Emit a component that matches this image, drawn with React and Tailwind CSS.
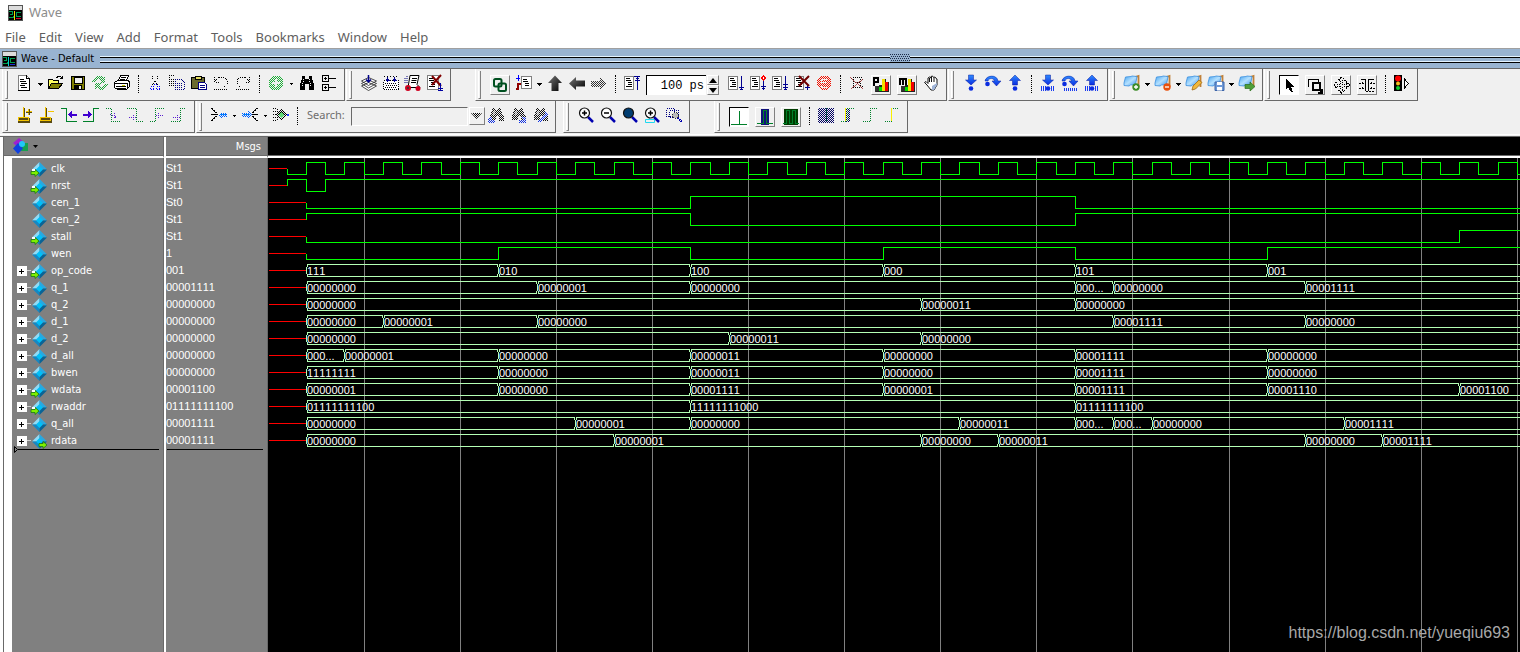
import { useState } from "react";

// time step n -> x inside the wave pane (half a clock period per step)
const tx = (n) => Math.round(38 + 19.22 * n);

const signals = [
  { name: "clk", value: "St1", port: "in", levels: Array.from({ length: 65 }, (_, i) => [i - 1, i % 2]) },
  { name: "nrst", value: "St1", port: "in", levels: [[-1, 1], [0, 0], [1, 1]] },
  { name: "cen_1", value: "St0", levels: [[0, 0], [20, 1], [40, 0]] },
  { name: "cen_2", value: "St1", levels: [[0, 1], [20, 0], [40, 1]] },
  { name: "stall", value: "St1", port: "in", levels: [[0, 0], [60, 1]] },
  { name: "wen", value: "1", levels: [[0, 0], [10, 1], [20, 0], [30, 1], [40, 0], [50, 1]] },
  { name: "op_code", value: "001", port: "in", bus: [[0, "111"], [10, "010"], [20, "100"], [30, "000"], [40, "101"], [50, "001"]] },
  { name: "q_1", value: "00001111", bus: [[0, "00000000"], [12, "00000001"], [20, "00000000"], [40, "000..."], [42, "00000000"], [52, "00001111"]] },
  { name: "q_2", value: "00000000", bus: [[0, "00000000"], [32, "00000011"], [40, "00000000"]] },
  { name: "d_1", value: "00000000", bus: [[0, "00000000"], [4, "00000001"], [12, "00000000"], [42, "00001111"], [52, "00000000"]] },
  { name: "d_2", value: "00000000", bus: [[0, "00000000"], [22, "00000011"], [32, "00000000"]] },
  { name: "d_all", value: "00000000", bus: [[0, "000..."], [2, "00000001"], [10, "00000000"], [20, "00000011"], [30, "00000000"], [40, "00001111"], [50, "00000000"]] },
  { name: "bwen", value: "00000000", bus: [[0, "11111111"], [10, "00000000"], [20, "00000011"], [30, "00000000"], [40, "00001111"], [50, "00000000"]] },
  { name: "wdata", value: "00001100", port: "in", bus: [[0, "00000001"], [10, "00000000"], [20, "00001111"], [30, "00000001"], [40, "00001111"], [50, "00001110"], [60, "00001100"]] },
  { name: "rwaddr", value: "01111111100", port: "in", bus: [[0, "01111111100"], [20, "11111111000"], [40, "01111111100"]] },
  { name: "q_all", value: "00001111", bus: [[0, "00000000"], [14, "00000001"], [20, "00000000"], [34, "00000011"], [40, "000..."], [42, "000..."], [44, "00000000"], [54, "00001111"]] },
  { name: "rdata", value: "00001111", port: "out", bus: [[0, "00000000"], [16, "00000001"], [32, "00000000"], [36, "00000011"], [52, "00000000"], [56, "00001111"]] },
];

const menus = ["File", "Edit", "View", "Add", "Format", "Tools", "Bookmarks", "Window", "Help"];

/* ---------- icons ---------- */

// 1px checkerboard used for greyed out icons
function Defs() {
  return (
    <svg className="absolute size-0" aria-hidden="true">
      <defs>
        <pattern id="checker" width="2" height="2" patternUnits="userSpaceOnUse">
          <path d="M0 0h1v1h-1zM1 1h1v1h-1z" fill="#fff" shapeRendering="crispEdges" />
        </pattern>
        <mask id="dither" maskUnits="userSpaceOnUse" x="0" y="0" width="20" height="20">
          <rect width="20" height="20" fill="url(#checker)" />
        </mask>
        <linearGradient id="blue" x1="0" y1="0" x2="0" y2="1">
          <stop offset="0" stopColor="#2f8cff" />
          <stop offset="1" stopColor="#0a2be0" />
        </linearGradient>
        <linearGradient id="flag" x1="0" y1="0" x2="1" y2="1">
          <stop offset="0" stopColor="#4aa6f0" />
          <stop offset="0.5" stopColor="#b4e0ff" />
          <stop offset="1" stopColor="#3b93e8" />
        </linearGradient>
        <linearGradient id="dark" x1="0" y1="0" x2="1" y2="1">
          <stop offset="0" stopColor="#777" />
          <stop offset="1" stopColor="#000" />
        </linearGradient>
      </defs>
    </svg>
  );
}

function Px({ children, soft, off, w = 16 }) {
  return (
    <svg width={w} height="16" viewBox={`0 0 ${w} 16`} fill="none" className="shrink-0 overflow-visible" shapeRendering={soft ? "auto" : "crispEdges"} aria-hidden="true">
      {off ? <g mask="url(#dither)">{children}</g> : children}
    </svg>
  );
}

const WaveLogo = ({ c = "#e00030", m = "#f0e000" }) => (
  <Px>
    <path d="M.5.5h14v15h-14z" fill="#000" stroke="#555" />
    <path d="M1 1h13v4H1z" fill="#dcdcdc" />
    <path d="M1 6.500h3v3H2M1 12.500h4v-2M8 7.500h5M8.500 7v4h4" stroke="#00a050" />
    <path d="M6.500 6v9" stroke={m} />
    <path d="M8 13.500h5" stroke={c} />
  </Px>
);
const NewIcon = () => (
  <Px>
    <path d="M1.500.5h8l3 3v12h-11z" fill="#fff" stroke="#808080" />
    <path d="M9.500 0v3.500h3v12H1M3 4.500h4M3 6.500h6M4 8.500h6M3 10.500h5M4 12.500h6" stroke="#000" />
  </Px>
);
const OpenIcon = () => (
  <Px>
    <path d="M.5 13.500v-9h4l1 1h5v3" fill="#ffff60" stroke="#000" />
    <path d="M.5 13.500l3-5h11l-4 5z" fill="#808000" stroke="#000" />
    <path d="M8.500 2.500l2-1h2l2 2M14.500 1v3M12 3.500h3" stroke="#000" />
  </Px>
);
const SaveIcon = () => (
  <Px>
    <path d="M1.500 1.500h13v13h-13z" fill="#808000" stroke="#000" />
    <path d="M4 2h8v6H4z" fill="#f0f0f0" stroke="#000" />
    <path d="M4 10h8v5H4z" fill="#000" />
    <path d="M9 11h2v3H9z" fill="#f0f0f0" />
  </Px>
);
const RefreshIcon = () => (
  <Px off>
    <path d="M0 7l2-4 4-2h3l2 2 2-1v6H7l2-2-2-2-3 1-1 3zM16 9l-2 4-3 2H8l-3-2-2 1V8h6l-2 2 2 2 2-1 2-2z" fill="#1fa43a" />
  </Px>
);
const PrintIcon = () => (
  <Px>
    <path d="M4.500 5.500l2-5h8l-2 5" fill="#fff" stroke="#000" />
    <path d="M7 2.500h5M6 4.500h5" stroke="#000" />
    <path d="M.5 12.500v-5l3-2h11l1 2v4l-3 3h-9z" fill="#fff" stroke="#000" />
    <path d="M1 8.500h12M2 11.500h10M3 13.500h9M13.500 8v5" stroke="#000" />
    <path d="M8 10h3v1H8z" fill="#d0d000" />
  </Px>
);
const CutIcon = () => (
  <Px>
    <path d="M5.500 1v2l5 7M10.500 1v2l-5 7" stroke="#000" strokeDasharray="1 1" />
    <path d="M3.500 11.500h3v3h-3zM9.500 11.500h3v3h-3zM7 9.500h3" stroke="#00f" strokeDasharray="1 1" />
  </Px>
);
const CopyIcon = () => (
  <Px off>
    <path d="M.5.5h5l3 3v7h-8zM2 4.500h4M2 6.500h4M2 8.500h4" stroke="#000" />
    <path d="M6.500 4.500h6l3 3v7h-9z" fill="#f0f0f0" stroke="#000080" />
    <path d="M8 8.500h6M8 10.500h6M8 12.500h6" stroke="#000080" />
  </Px>
);
const PasteIcon = () => (
  <Px>
    <path d="M.5 2.500h13v11H.5z" fill="#6b6b30" stroke="#000" />
    <path d="M4 1h6v3H4z" fill="#e8e060" stroke="#000" />
    <path d="M7.500 7.500h6l2 2v5h-8z" fill="#fff" stroke="#000080" />
    <path d="M9 10.500h5M9 12.500h5" stroke="#000080" />
  </Px>
);
const UndoIcon = () => (
  <Px>
    <path d="M1.500 2v5h5M2 6l4-4h5l3 3v4l-4 4" stroke="#000" strokeDasharray="1 1" />
    <path d="M1 14.500h14" stroke="#000" strokeDasharray="1 1" />
  </Px>
);
const RedoIcon = () => (
  <Px>
    <path d="M14.500 2v5h-5M14 6l-4-4H5L2 5v4l4 4" stroke="#000" strokeDasharray="1 1" />
    <path d="M1 14.500h14" stroke="#000" strokeDasharray="1 1" />
  </Px>
);
const AddIcon = () => (
  <Px off>
    <circle cx="8" cy="8" r="7.500" fill="#1fae3a" />
    <path d="M8 4v8M4 8h8" stroke="#f0f0f0" strokeWidth="2" />
  </Px>
);
const FindIcon = () => (
  <Px>
    <path d="M3 1h3v3h4V1h3v3l2 5v6h-5V9H6v6H1V9l2-5z" fill="#000" />
    <path d="M4.500 4v3M3.500 8v4M10.500 4v3M11.500 8v4" stroke="#f0f0f0" strokeDasharray="1 1" />
  </Px>
);
const TreeIcon = () => (
  <Px>
    <path d="M1.500.5h6v6h-6zM1.500 9.500h6v6h-6zM8 3.500h7M8 12.500h7M3 3.500h3M4.500 2v3M3 12.500h3M4.500 11v3" stroke="#000" />
  </Px>
);
const CompileIcon = () => (
  <Px soft>
    <path d="M.5 11l7-3.500 8 3.500-8 4.500zM.5 8.500l7-3.500 8 3.500-8 4.500zM.5 6l7-3.500L15.500 6l-8 4.500z" fill="#fff" stroke="#222" strokeWidth=".8" />
    <path d="M7.500 0v6M5 4.500l2.500 2.500L10 4.500" stroke="#00008b" strokeWidth="1.500" />
  </Px>
);
const CompileAllIcon = () => (
  <Px>
    <path d="M.5 5.500h15v9H.5z" fill="#fff" stroke="#000" strokeDasharray="1 1" />
    <path d="M2 8.500h12M3 10.500h12M2 12.500h12" stroke="#000" strokeDasharray="1 1" />
    <path d="M1 1.500h14" stroke="#000" strokeDasharray="1 2" />
    <path d="M4.500 2v5M2.500 5.500h4M11.500 2v5M9.500 5.500h4" stroke="#00008b" strokeWidth="1" />
    <path d="M3 4.500h3M10 4.500h3" stroke="#00008b" />
  </Px>
);
const SimulateIcon = () => (
  <Px soft>
    <path d="M5 .5h9l-2 9 3 3H3z" fill="#fff" stroke="#000" />
    <path d="M7 3.500h5M6.500 5.500h5M6 7.500h5" stroke="#000" />
    <path d="M2 1v8M0 3v6" stroke="#000080" strokeDasharray="1 1" />
    <circle cx="3" cy="13" r="2" fill="#333" stroke="#d00020" strokeWidth="2" />
    <circle cx="13" cy="13.500" r="2.500" fill="#d00020" />
  </Px>
);
const Lines = () => <path d="M2 3.500h4M2 5.500h5M4 7.500h4M4 9.500h4M2 11.500h6" stroke="#000" />;
const EndSimIcon = () => (
  <Px>
    <path d="M.5.5h11v14H.5z" fill="#fff" stroke="#808080" />
    <Lines />
    <path d="M5 1l9 10M14 0L5 10" stroke="#800000" strokeWidth="2" shapeRendering="auto" />
    <path d="M13.500 8v7M11 13.500h5M11 15.500h5" stroke="#0000a0" />
  </Px>
);
const LinkIcon = () => (
  <Px soft>
    <rect x="2" y="2" width="7.500" height="7.500" rx="1.500" stroke="#005020" strokeWidth="2" />
    <rect x="6.500" y="6.500" width="7.500" height="7.500" rx="1.500" stroke="#005020" strokeWidth="2" />
  </Px>
);
const RestartIcon = () => (
  <Px>
    <path d="M5.500 1.500h10v12h-10z" fill="#fff" stroke="#808080" />
    <path d="M7 4.500h4M7 6.500h5M9 8.500h4M9 10.500h4" stroke="#000" />
    <path d="M2.500 0v6M0 3.500h4" stroke="#00f" />
    <path d="M0 14h2V9h3" stroke="#900000" strokeWidth="2" />
  </Px>
);
const UpIcon = () => (
  <Px soft>
    <path d="M8 .5l7 7.500H11.500V16h-7V8H1z" fill="url(#dark)" />
  </Px>
);
const LeftIcon = () => (
  <Px soft>
    <path d="M0 8.500L7 2v3.500h9v6H7V15z" fill="url(#dark)" />
  </Px>
);
const RightIcon = () => (
  <Px off>
    <path d="M16 8.500L9 2v3.500H0v6h9V15z" fill="#333" />
  </Px>
);
const DocStepIcon = ({ kind }) => (
  <Px>
    <path d="M.5 1.500h9v13h-9z" fill="#fff" stroke="#808080" />
    <Lines />
    {kind === "top" && <path d="M10 1.500h6M13.500 1v14M11 5.500h5M12 3.500h3" stroke="#000090" />}
    {kind === "run" && <path d="M13.500 1v13M11 12.500h5M12 14.500h3" stroke="#000090" />}
    {kind === "cont" && <path d="M13.500 6v9M11 11.500h5M12 13.500h3" stroke="#000090" />}
    {kind === "cont" && <path d="M13.500 1l2 2-2 2-2-2z" stroke="#f00" fill="#fff" />}
    {kind === "all" && <path d="M13.500 1v13M11 9.500h5M11 12.500h5M12 14.500h3" stroke="#000090" />}
    {kind === "break" && <path d="M13.500 9v6M11 12.500h5" stroke="#000090" />}
    {kind === "break" && <path d="M5 1l10 10M15 1L5 11" stroke="#700000" strokeWidth="2" shapeRendering="auto" />}
  </Px>
);
const StopIcon = () => (
  <Px off>
    <path d="M5 1h6l4 4v6l-4 4H5l-4-4V5z" fill="#f01000" />
    <path d="M11 4.500H5v3h6M5 9.500v3h6" stroke="#f0f0f0" />
  </Px>
);
const NoContextIcon = () => (
  <Px>
    <path d="M4 2.500h9M2 3.500h2M4.500 4v7M11.500 4v8M4 12.500h9M6 7.500h6M13 4.500h2M13 11.500h2" stroke="#000" strokeDasharray="1 1" />
    <path d="M1 2l13 12M14 4L2 14" stroke="#a03030" strokeWidth=".8" />
  </Px>
);
const BarsIcon = ({ m }) => (
  <Px>
    {m ? <path d="M1 8V2M4 8V2M7 8V2M0 2h8" stroke="#000" strokeWidth="2" /> : <path d="M1 9V1h4v4H1" stroke="#000" strokeWidth="2" />}
    <path d="M2 9h5v6H2z" fill="#333" />
    <path d="M6 8h4v7H6z" fill="#222" />
    <path d="M6 10h3v4H6z" fill="#00e000" />
    <path d="M9 2h3v12H9z" fill="#f0e000" />
    <path d="M12 5h3v9h-3z" fill="#f00000" />
    <path d="M3 14.500h13M15.500 5v10M12.500 2v3" stroke="#222" />
  </Px>
);
const HandIcon = () => (
  <Px soft>
    <path d="M4 10L1.500 7.500 3 6.500l2 2V3l1.500-1L8 3V1.500L9.500 1l1 1.500 1.500-.5 1 1.500 1 .5v6l-3 5H8z" fill="#fff" stroke="#111" />
    <path d="M6.500 3v4M8.500 2v5M11 3v4" stroke="#111" />
    <path d="M9 11l5-3v2l-3 5H9z" fill="#9fb4d8" />
  </Px>
);
const Ticks = () => <path d="M1.500 11v5M3.500 11v5M5.500 11v5M11.500 11v5M13.500 11v5" stroke="#1a3cf0" />;
const StepIcon = ({ up, over, bars }) => (
  <Px soft>
    {over ? (
      <>
        <path d="M0 6C1 0 12-1 13 6h3l-4.500 5L7 6h2.500C9 3 4 2.500 3 6z" fill="url(#blue)" stroke="#0a1ea0" strokeWidth=".5" />
        <circle cx="2.500" cy="9" r="2.300" fill="#0a2be0" />
        {bars && <path d="M2 14.500h14" stroke="#1a3cf0" strokeWidth="3" strokeDasharray="1 1" />}
      </>
    ) : (
      <>
        <path d={up ? "M8 0l5.500 5.500H10.500V10h-5V5.500H2.500z" : "M8 10L2.500 5H5.500V0h5v5h3z"} fill="url(#blue)" stroke="#0a1ea0" strokeWidth=".5" />
        <circle cx="8" cy="13.500" r="2.300" fill="#0a2be0" />
        {bars && <Ticks />}
      </>
    )}
  </Px>
);
const FlagIcon = ({ kind }) => (
  <Px soft>
    <path d="M11 2l3.500-1v11" stroke="#c08038" strokeWidth="1.800" />
    <path d="M0 8l1.500-6L7 1.500 8 1l5 .5-1.500 8-5 .5-1.500 1-5-.5z" fill="url(#flag)" stroke="#3a8fe0" strokeWidth=".8" />
    {kind === "add" && <><circle cx="12" cy="12" r="3.700" fill="#3c8c28" /><path d="M12 10v4M10 12h4" stroke="#fff" strokeWidth="1.300" /></>}
    {kind === "del" && <><circle cx="12" cy="12" r="3.700" fill="#e8500c" /><path d="M10 12h4" stroke="#fff" strokeWidth="1.300" /></>}
    {kind === "edit" && <path d="M6 15l1-4 6-6 3 2.500-6.500 6.500z" fill="#f0b83c" stroke="#a06a14" strokeWidth=".8" />}
    {kind === "save" && <><path d="M7 7h9v8.500H7z" fill="#6f9ad8" stroke="#3c64a8" /><path d="M9 7h5v3H9zM9 12h5v3.500H9z" fill="#fff" /></>}
    {kind === "go" && <path d="M6 9.500h5V7l5 4.500-5 4.500v-2.500H6z" fill="#4f9f38" stroke="#2c6e1c" strokeWidth=".7" />}
  </Px>
);
const PointerIcon = () => (
  <Px>
    <path d="M5 2v10l2-2 3 5h2l-2-5h3z" fill="#000" />
  </Px>
);
const ZoomModeIcon = () => (
  <Px>
    <path d="M1.500 10V2.500h10v2" stroke="#000" />
    <path d="M6 6h7v7H6z" stroke="#000" strokeWidth="2" />
    <path d="M13 13l3 3M15 12v4h-4" stroke="#000" strokeWidth="2" />
  </Px>
);
const PanIcon = () => (
  <Px>
    <path d="M8.500 0l3 3h-2v4h4V5l3 3-3 3V9h-4v4h2l-3 3-3-3h2V9h-4v2l-3-3 3-3v2h4V3h-2z" stroke="#000" strokeDasharray="1 1" />
  </Px>
);
const EditModeIcon = () => (
  <Px>
    <path d="M2 2.500h4.500v11M9.500 13.500v-11H15" stroke="#000" />
    <path d="M0 6.500h5M3.500 5v3M0 11.500h5M3.500 10v3M11 6.500h5M12.500 5v3M11 11.500h5M12.500 10v3M7 14.500h9" stroke="#000" strokeDasharray="2 1" />
  </Px>
);
const LightIcon = () => (
  <Px>
    <path d="M0 0h8v16H0z" fill="#000" />
    <circle cx="4" cy="3.500" r="3" fill="#f00" shapeRendering="auto" />
    <circle cx="4" cy="8.500" r="2" fill="#f0c020" shapeRendering="auto" />
    <circle cx="4" cy="13" r="2" fill="#10d030" shapeRendering="auto" />
    <path d="M10.500 4v9l4-4.500z" fill="#fff" stroke="#000" />
  </Px>
);
const CursorIcon = ({ plus }) => (
  <Px>
    <path d="M6.500 1v10M1.500 11.500h10v3h-10z" stroke="#5a4a10" strokeWidth="2" />
    <path d="M6.500 0v11M1.500 10.500h10v3h-10zM9 4.500h6" stroke="#f4c400" />
    {plus && <path d="M11.500 2v6" stroke="#f4c400" />}
    {plus && <path d="M12.500 2v6M9 5.500h6" stroke="#5a4a10" />}
  </Px>
);
const EdgePrevIcon = () => (
  <Px>
    <path d="M0 1.500h5.500v13H16" stroke="#00802a" />
    <path d="M7 7.500l4-4v3h5v2h-5v3z" fill="#4000d0" />
  </Px>
);
const EdgeNextIcon = () => (
  <Px>
    <path d="M0 14.500h10.500v-13H16" stroke="#00802a" />
    <path d="M9 7.500l-4-4v3H0v2h5v3z" fill="#4000d0" />
  </Px>
);
const EdgeIcon = ({ d, a }) => (
  <Px>
    <path d={d} stroke="#00802a" strokeDasharray="1 1" />
    <path d={a} stroke="#5a20d0" strokeDasharray="1 1" />
  </Px>
);
const FanIcon = ({ kind }) => (
  <Px>
    {kind === "l" && <><path d="M0 1.500h2M2 3.500h2M4 5.500h2M0 7.500h7M4 9.500h2M2 11.500h2M0 13.500h2M1.500 2v1M3.500 4v1M3.500 10v1M1.500 12v1" stroke="#000" /><g mask="url(#dither)"><path d="M7 8l4-4v2h5v4h-5v2z" fill="#0060ff" /></g><path d="M9 7.500h6" stroke="#0080ff" /></>}
    {kind === "r" && <><path d="M16 1.500h-2M14 3.500h-2M12 5.500h-2M16 7.500h-6M12 9.500h-2M14 11.500h-2M16 13.500h-2M13.500 2v1M11.500 4v1M11.500 10v1M13.500 12v1" stroke="#000" /><g mask="url(#dither)"><path d="M10 8L6 4v2H0v4h6v2z" fill="#0060ff" /></g><path d="M1 7.500h7" stroke="#0080ff" /></>}
    {kind === "x" && <><path d="M0 1.500h4M0 4.500h5M0 7.500h4M0 10.500h5M0 13.500h4M4.500 2v3M4.500 10v3" stroke="#000" strokeDasharray="1 1" /><g mask="url(#dither)"><path d="M8 2l6 6-6 6-5-6z" fill="#000" /></g><path d="M8 5l3 3-3 3-3-3z" fill="#60d878" /><path d="M14 7h2v2h-2z" fill="#2040ff" /></>}
  </Px>
);
const FindDirIcon = ({ tip }) => (
  <Px off>
    <path d="M4 1h3v2h3V1h3v3l3 5v5h-5V9H8v4H2V9l2-5z" fill="#111" />
    <path d="M5 4h2v4H5z" fill="#888" />
    <path d={tip} stroke="#1030e0" strokeWidth="3" />
  </Px>
);
const ZoomIcon = ({ kind }) => (
  <Px soft>
    {kind === "sel" && <path d="M1.500 12.500h9v3h-9zM5.500 1v12" stroke="#20d8f0" />}
    <path d="M10 10l5 5" stroke="#0000b0" strokeWidth="2.500" />
    <circle cx="6.500" cy="6" r="5" fill={kind === "full" ? "#003c70" : "#fff"} stroke="#111" strokeWidth="1.200" />
    {kind !== "full" && <path d="M4 6h5" stroke="#000" strokeWidth="1.500" />}
    {(kind === "in" || kind === "sel") && <path d="M6.500 3.500v5" stroke="#000" strokeWidth="1.500" />}
  </Px>
);
const ZoomRangeIcon = () => (
  <Px>
    <path d="M.5 1.500h8v8h-8zM3.500 3.500h9v7h-9z" stroke="#000080" strokeDasharray="1 1" />
    <circle cx="9.500" cy="8.500" r="3" fill="#bbb" stroke="#333" strokeDasharray="1 1" />
    <path d="M12 11l4 4" stroke="#0000b0" strokeWidth="2" strokeDasharray="1 1" />
  </Px>
);
const PulseIcon = ({ fill, d }) => (
  <Px>
    {fill && <path d={fill === "navy" ? "M4 0h8v16H4z" : "M1 0h14v16H1z"} fill={fill === "navy" ? "#10107a" : "#003c00"} />}
    <path d={d} stroke="#00802a" />
  </Px>
);
const EdgeModeIcon = ({ y, n, d }) => (
  <Px>
    {n && <g mask="url(#dither)"><path d={n} fill="#000060" /></g>}
    {y && <path d={y} stroke="#f8f000" />}
    <path d={d} stroke="#00802a" strokeDasharray="1 1" />
  </Px>
);

const Diamond = ({ port }) => (
  <Px soft w={15}>
    <path d="M7.500 1L0 8.500h7.500z" fill="#8fdcf8" />
    <path d="M7.500 1L15 8.500H7.500z" fill="#28a8e0" />
    <path d="M0 8.500L7.500 16V8.500z" fill="#1488c4" />
    <path d="M15 8.500L7.500 16V8.500z" fill="#0a6496" />
    <path d="M7.500 5L11 8.500 7.500 12 4 8.500z" fill="#00c0f8" />
    {port === "in" && <path d="M-1 10.500h4V8.500l4 3.500-4 3.500v-2h-4z" fill="#7ef000" stroke="#1c7a10" strokeWidth=".8" />}
    {port === "in" && <path d="M0 8h3v2H0z" fill="#fff" />}
    {port === "out" && <path d="M7 10.500h4V8.500l4 3.500-4 3.500v-2H7z" fill="#7ef000" stroke="#1c7a10" strokeWidth=".8" />}
  </Px>
);

/* ---------- toolbar parts ---------- */

function Bar({ children, className = "" }) {
  return (
    <div role="toolbar" className={`flex h-8 shrink-0 items-start border-r border-b border-l border-r-[#696969] border-b-[#696969] border-l-white pt-1.5 pr-1 ${className}`}>
      <span className="-mt-1 mr-1.5 ml-0.5 h-7 w-[3px] shrink-0 border-r border-b border-l border-r-[#808080] border-b-[#808080] border-l-white" />
      {children}
    </div>
  );
}

function Tool({ label, children, disabled }) {
  return (
    <button type="button" aria-label={label} disabled={disabled} className="flex h-5 w-[22px] shrink-0 items-start justify-center">
      {children}
    </button>
  );
}

function Framed({ label, children, pressed }) {
  return (
    <button
      type="button"
      aria-label={label}
      aria-pressed={!!pressed}
      className={`mx-[3px] flex size-5 shrink-0 items-center justify-center border ${
        pressed ? "border-t-black border-r-white border-b-white border-l-black bg-white" : "border-t-white border-r-[#808080] border-b-[#808080] border-l-white"
      }`}
    >
      {children}
    </button>
  );
}

function Caret({ label, small }) {
  return (
    <button type="button" aria-label={label} className="flex h-5 w-[9px] shrink-0 items-start justify-center pt-2">
      <svg width="5" height="3" viewBox="0 0 5 3" shapeRendering="crispEdges">
        <path d={small ? "M1 0h3v1h-1v1h-1v-1h-1z" : "M0 0h5v1h-1v1h-1v1h-1v-1h-1v-1h-1z"} fill="#000" />
      </svg>
    </button>
  );
}

const Sep = () => <span className="mx-[5px] h-[18px] w-px shrink-0 border-l border-dotted border-black" />;

/* ---------- wave pane ---------- */

function linePath(levels, y) {
  let d = "";
  levels.forEach(([n, v], i) => {
    const x = tx(n) + 0.5;
    const ly = v ? y + 4.5 : y + 16.5;
    d += i === 0 ? `M${x} ${y + 10.5}V${ly}` : `H${x}V${ly}`;
  });
  return d + "H4000";
}

function busPath(bus, y) {
  return bus
    .map(([n], i) => {
      const a = tx(n) + 1.5;
      const b = i + 1 < bus.length ? tx(bus[i + 1][0]) - 0.5 : 4000;
      return `M${b} ${y + 4.5}H${a}V${y + 7}M${a - 1} ${y + 7}V${y + 14}M${a} ${y + 14}V${y + 16.5}H${b}M${b} ${y + 4}v3M${b} ${y + 14}v3`;
    })
    .join("");
}

function Waves() {
  const grid = Array.from({ length: 36 }, (_, k) => tx(3 + 5 * k));
  return (
    <svg className="h-full w-full font-['Liberation_Sans',Arial,sans-serif] text-[11px] [font-kerning:none]" shapeRendering="crispEdges" role="img" aria-label="Waveforms">
      {grid.map((x) => (
        <line key={x} x1={x + 0.5} x2={x + 0.5} y1="0" y2="100%" stroke="#808080" />
      ))}
      {signals.map((s, i) => {
        const y = 17 * i;
        const first = (s.levels || s.bus)[0][0];
        return (
          <g key={s.name} fill="none">
            <path d={`M1 ${y + 10.5}H${tx(first)}`} stroke="#f00" />
            {s.levels ? <path d={linePath(s.levels, y)} stroke="#0f0" /> : <path d={busPath(s.bus, y)} stroke="#b4ffb4" />}
            {s.bus?.map(([n, v]) => (
              <text key={n} x={tx(n) + 1} y={y + 15} fill="#fff">
                {v}
              </text>
            ))}
          </g>
        );
      })}
    </svg>
  );
}

/* ---------- signal list ---------- */

function SignalTable() {
  return (
    <table className="h-full w-[265px] shrink-0 table-fixed border-separate border-spacing-0 border-l border-[#696969] bg-[#808080] text-left text-[11px] leading-[17px] text-white">
      <colgroup>
        <col className="w-2" />
        <col className="w-[152px]" />
        <col />
      </colgroup>
      <thead>
        <tr className="h-[21px]">
          <th colSpan="2" className="border-r border-b-2 border-r-[#696969] border-b-white p-0 font-normal">
            <button type="button" aria-label="Signal filter" className="flex h-[19px] w-full items-center gap-[3px] border-b border-[#696969] pl-2">
              <svg width="18" height="16" viewBox="0 0 18 16" aria-hidden="true">
                <path d="M7 0l6 5-6 5-6-5z" fill="#a020d0" />
                <path d="M9 5h7v8H9z" fill="#18a050" />
                <path d="M6 5l5 5.500L6 16 1 10.500z" fill="#1040e0" />
                <circle cx="10" cy="6" r="3" fill="#20c8f8" />
              </svg>
              <svg width="5" height="3" viewBox="0 0 5 3" aria-hidden="true">
                <path d="M0 0h5L2.500 3z" fill="#000" />
              </svg>
            </button>
          </th>
          <th className="border-r border-b-2 border-l-2 border-r-[#696969] border-b-white border-l-white p-0 font-normal">
            <div className="h-[19px] border-b border-[#696969] pt-px pr-1.5 text-right">Msgs</div>
          </th>
        </tr>
      </thead>
      <tbody>
        <tr className="h-0.5">
          <td className="bg-white p-0" />
          <td className="border-r border-[#696969] p-0" />
          <td className="border-r border-l-2 border-r-[#696969] border-l-white p-0" />
        </tr>
        {signals.map((s) => (
          <tr key={s.name} className="h-[17px]">
            <td className="bg-white p-0" />
            <th scope="row" className="border-r border-[#696969] p-0 font-normal">
              <div className="flex h-[17px] items-center pl-[5px]">
                {s.bus ? (
                  <button type="button" aria-label={`Expand ${s.name}`} className="flex size-2.5 shrink-0 items-center justify-center bg-white">
                    <svg width="6" height="6" viewBox="0 0 6 6" shapeRendering="crispEdges">
                      <path d="M0 3h5v1H0zM2 1h1v5H2z" fill="#000" />
                    </svg>
                  </button>
                ) : (
                  <span className="w-2.5 shrink-0" />
                )}
                <span className={`mr-px w-1 shrink-0 border-t ${s.bus ? "border-[#d0d0d0]" : "border-transparent"}`} />
                <Diamond port={s.port} />
                <span className="ml-1">{s.name}</span>
              </div>
            </th>
            <td className="overflow-hidden border-r border-l-2 border-r-[#696969] border-l-white p-0 font-['Liberation_Sans',Arial,sans-serif] [font-kerning:none]">
              <div className="h-[17px]">{s.value}</div>
            </td>
          </tr>
        ))}
        {/* rest of the pane, starts with the insertion line */}
        <tr>
          <td className="bg-white p-0" />
          <td className="border-r border-[#696969] p-0 align-top">
            <div className="flex items-start pr-1 pl-0.5">
              <svg width="4" height="7" viewBox="0 0 4 7" className="-mt-[3px]" aria-hidden="true">
                <path d="M.5.500v6l3-3z" fill="none" stroke="#000" />
              </svg>
              <span className="flex-1 border-t border-black" />
            </div>
          </td>
          <td className="border-r border-l-2 border-r-[#696969] border-l-white p-0 align-top">
            <div className="mr-1 ml-px border-t border-black" />
          </td>
        </tr>
      </tbody>
    </table>
  );
}

export default function App() {
  const [runLength, setRunLength] = useState("100 ps");
  const [search, setSearch] = useState("");

  return (
    <div className="relative flex h-screen flex-col overflow-hidden bg-[#f0f0f0] font-['DejaVu_Sans_Condensed','DejaVu_Sans',sans-serif] text-[11px] text-black">
      <Defs />
      <header className="bg-white font-['Noto_Sans',sans-serif] text-[13px]">
        <div className="flex h-[25px] items-center gap-[5px] pl-2 text-[#8c8c8c]">
          <WaveLogo />
          <h1>Wave</h1>
        </div>
        <nav className="flex h-[23px] items-center gap-[13px] pt-0.5 pl-[5px] text-[#5e5e5e]">
          {menus.map((m) => (
            <button key={m} type="button">
              {m}
            </button>
          ))}
        </nav>
      </header>

      <div className="flex h-[21px] shrink-0 items-center gap-[3px] border-t border-b border-t-[#a0a0a0] border-b-[#696969] bg-[#99b4d1] pl-0.5">
        <WaveLogo c="#2030d0" m="#00d0d0" />
        <h2 className="pt-0.5 text-[11px]">Wave - Default</h2>
        <div className="relative ml-[3px] flex flex-1 flex-col gap-[3px] pt-px">
          <div className="h-0.5 border-b border-black bg-[#e4f4ff]" />
          <div className="h-0.5 border-b border-black bg-[#e4f4ff]" />
          <svg width="20" height="8" viewBox="0 0 20 8" shapeRendering="crispEdges" className="absolute -top-px left-[790px] bg-[#99b4d1]" aria-hidden="true">
            <path d="M0 .5h20M1 2.500h20M0 4.500h20M1 6.500h20" stroke="#1c2c48" strokeDasharray="1 1" />
          </svg>
        </div>
      </div>

      <div className="flex shrink-0 pl-0.5">
        <Bar>
          <Tool label="New"><NewIcon /></Tool>
          <Caret label="New options" />
          <Tool label="Open"><OpenIcon /></Tool>
          <Tool label="Save"><SaveIcon /></Tool>
          <Tool label="Reload" disabled><RefreshIcon /></Tool>
          <Tool label="Print"><PrintIcon /></Tool>
          <Sep />
          <Tool label="Cut" disabled><CutIcon /></Tool>
          <Tool label="Copy" disabled><CopyIcon /></Tool>
          <Tool label="Paste"><PasteIcon /></Tool>
          <Tool label="Undo" disabled><UndoIcon /></Tool>
          <Tool label="Redo" disabled><RedoIcon /></Tool>
          <Sep />
          <Tool label="Add" disabled><AddIcon /></Tool>
          <Caret label="Add options" small />
          <Tool label="Find"><FindIcon /></Tool>
          <Tool label="Collapse"><TreeIcon /></Tool>
        </Bar>
        <Bar className="ml-px">
          <Tool label="Compile"><CompileIcon /></Tool>
          <Tool label="Compile all"><CompileAllIcon /></Tool>
          <Tool label="Simulate"><SimulateIcon /></Tool>
          <Tool label="End simulation"><EndSimIcon /></Tool>
        </Bar>
        <Bar className="ml-6">
          <Framed label="Link"><LinkIcon /></Framed>
          <Tool label="Restart"><RestartIcon /></Tool>
          <Caret label="Restart options" />
          <Tool label="Up"><UpIcon /></Tool>
          <Tool label="Back"><LeftIcon /></Tool>
          <Tool label="Forward" disabled><RightIcon /></Tool>
          <Sep />
          <Tool label="Restart run"><DocStepIcon kind="top" /></Tool>
          <input
            aria-label="Run length"
            value={runLength}
            onChange={(e) => setRunLength(e.target.value)}
            className="ml-[3px] h-5 w-[60px] shrink-0 border-t border-l border-black bg-white pr-0.5 text-right font-['Liberation_Mono',monospace] text-xs"
          />
          <div className="mr-1.5 ml-px flex shrink-0 flex-col">
            <button type="button" aria-label="Increase" className="flex h-2.5 w-3 items-center justify-center border border-white border-r-[#808080] border-b-[#808080]">
              <svg width="8" height="5" viewBox="0 0 8 5" className="shrink-0"><path d="M4 0l4 5H0z" fill="#000" /></svg>
            </button>
            <button type="button" aria-label="Decrease" className="flex h-2.5 w-3 items-center justify-center border border-white border-r-[#808080] border-b-[#808080]">
              <svg width="8" height="5" viewBox="0 0 8 5" className="shrink-0"><path d="M4 5l4-5H0z" fill="#000" /></svg>
            </button>
          </div>
          <Tool label="Run"><DocStepIcon kind="run" /></Tool>
          <Tool label="Continue run"><DocStepIcon kind="cont" /></Tool>
          <Tool label="Run all"><DocStepIcon kind="all" /></Tool>
          <Tool label="Break"><DocStepIcon kind="break" /></Tool>
          <Tool label="Stop" disabled><StopIcon /></Tool>
          <Sep />
          <Tool label="Context" disabled><NoContextIcon /></Tool>
          <Framed label="Performance profiling"><BarsIcon /></Framed>
          <Framed label="Memory profiling"><BarsIcon m /></Framed>
          <Tool label="Pan"><HandIcon /></Tool>
        </Bar>
        <Bar className="ml-px">
          <Tool label="Step into"><StepIcon /></Tool>
          <Tool label="Step over"><StepIcon over /></Tool>
          <Tool label="Step out"><StepIcon up /></Tool>
          <Sep />
          <Tool label="Step into current"><StepIcon bars /></Tool>
          <Tool label="Step over current"><StepIcon over bars /></Tool>
          <Tool label="Step out current"><StepIcon up bars /></Tool>
        </Bar>
        <Bar className="ml-px">
          <Tool label="Add bookmark"><FlagIcon kind="add" /></Tool>
          <Caret label="Add bookmark options" />
          <Tool label="Delete bookmark"><FlagIcon kind="del" /></Tool>
          <Caret label="Delete bookmark options" />
          <Tool label="Edit bookmarks"><FlagIcon kind="edit" /></Tool>
          <Tool label="Save bookmarks"><FlagIcon kind="save" /></Tool>
          <Caret label="Save bookmarks options" />
          <Tool label="Go to bookmark"><FlagIcon kind="go" /></Tool>
        </Bar>
        <Bar className="ml-px">
          <Framed label="Select mode" pressed><PointerIcon /></Framed>
          <Framed label="Zoom mode"><ZoomModeIcon /></Framed>
          <Framed label="Pan mode"><PanIcon /></Framed>
          <Framed label="Edit mode"><EditModeIcon /></Framed>
          <Sep />
          <Tool label="Stop drawing"><LightIcon /></Tool>
        </Bar>
      </div>

      <div className="flex shrink-0 pl-0.5">
        <Bar>
          <Tool label="Insert cursor"><CursorIcon plus /></Tool>
          <Tool label="Delete cursor"><CursorIcon /></Tool>
          <Tool label="Previous transition"><EdgePrevIcon /></Tool>
          <Tool label="Next transition"><EdgeNextIcon /></Tool>
          <Tool label="Previous falling edge" disabled><EdgeIcon d="M1 1.500h5.500v13H16" a="M5 7l4 2 3 2M9.500 6v6" /></Tool>
          <Tool label="Next falling edge" disabled><EdgeIcon d="M0 1.500h9.500v13H16" a="M2 10.500h7M6.500 8v5" /></Tool>
          <Tool label="Previous rising edge" disabled><EdgeIcon d="M1 14.500h5.500v-13H16" a="M7 8.500h7M9.500 6v5" /></Tool>
          <Tool label="Next rising edge" disabled><EdgeIcon d="M0 14.500h9.500v-13H15" a="M2 10.500h7M6.500 8v5" /></Tool>
        </Bar>
        <Bar className="ml-px">
          <Tool label="Drivers"><FanIcon kind="l" /></Tool>
          <Caret label="Drivers options" small />
          <Tool label="Readers"><FanIcon kind="r" /></Tool>
          <Caret label="Readers options" small />
          <Tool label="Expand net"><FanIcon kind="x" /></Tool>
          <Sep />
          <label htmlFor="search" className="ml-1 font-['Noto_Sans',sans-serif] text-[11px] text-[#6d6d6d]">
            Search:
          </label>
          <input
            id="search"
            value={search}
            onChange={(e) => setSearch(e.target.value)}
            className="ml-1.5 h-[19px] w-[117px] shrink-0 border border-[#696969] border-r-white border-b-white bg-[#f0f0f0]"
          />
          <button type="button" aria-label="Search history" className="ml-px flex h-[18px] w-4 shrink-0 items-center justify-center border border-white border-r-[#808080] border-b-[#808080]">
            <svg width="11" height="6" viewBox="0 0 11 6" className="shrink-0"><path d="M0 0h11L5.500 6z" fill="#000" mask="url(#dither)" /></svg>
          </button>
          <Tool label="Search backward" disabled><FindDirIcon tip="M0 14.500h7M3 10l-2 3" /></Tool>
          <Tool label="Search forward" disabled><FindDirIcon tip="M9 14.500h7M13 10l2 3" /></Tool>
          <Tool label="Search options" disabled><FindDirIcon tip="M7 15l8-9" /></Tool>
        </Bar>
        <Bar className="ml-[7px]">
          <Tool label="Zoom in"><ZoomIcon kind="in" /></Tool>
          <Tool label="Zoom out"><ZoomIcon kind="out" /></Tool>
          <Tool label="Zoom full"><ZoomIcon kind="full" /></Tool>
          <Tool label="Zoom on cursor"><ZoomIcon kind="sel" /></Tool>
          <Tool label="Zoom range" disabled><ZoomRangeIcon /></Tool>
        </Bar>
        <Bar className="ml-6">
          <Framed label="Zero width" pressed><PulseIcon d="M0 15.500h16M8.500 2v13" /></Framed>
          <Framed label="Pulse"><PulseIcon fill="navy" d="M0 14.500h6.500v-13h3v13H16" /></Framed>
          <Framed label="Full pulse"><PulseIcon fill="green" d="M0 14.500h3.500v-13h3v13h3v-13h3v13H16" /></Framed>
          <Sep />
          <Tool label="Show all" disabled><EdgeModeIcon n="M0 1h16v15H0z" d="M8.500 1v14" /></Tool>
          <Tool label="Show active" disabled><EdgeModeIcon n="M6 1h4v14H6z" y="M5.500 1v14" d="M1 14.500h6M7.500 14V1.500H15" /></Tool>
          <Tool label="Show edge" disabled><EdgeModeIcon d="M1 14.500h7.500v-13H15" /></Tool>
          <Tool label="Show marker" disabled><EdgeModeIcon y="M7.500 1v14" d="M1 14.500h7M9 1.500h6" /></Tool>
        </Bar>
      </div>

      <div className="mt-px mb-px h-px shrink-0 bg-white" />

      <main className="flex min-h-0 flex-1 border-t border-[#696969] bg-white pl-[3px]">
        <SignalTable />
        <div className="flex min-w-0 flex-1 flex-col bg-black">
          <div className="h-[21px] shrink-0 border-b-2 border-white">
            <div className="h-[19px] border-b border-[#696969]" />
          </div>
          <div className="min-h-0 flex-1">
            <Waves />
          </div>
        </div>
      </main>

      <a href="https://blog.csdn.net/yueqiu693" className="absolute right-2.5 bottom-[7px] font-['Liberation_Sans',Arial,sans-serif] text-base text-[#a8a8a8]">
        https://blog.csdn.net/yueqiu693
      </a>
    </div>
  );
}
